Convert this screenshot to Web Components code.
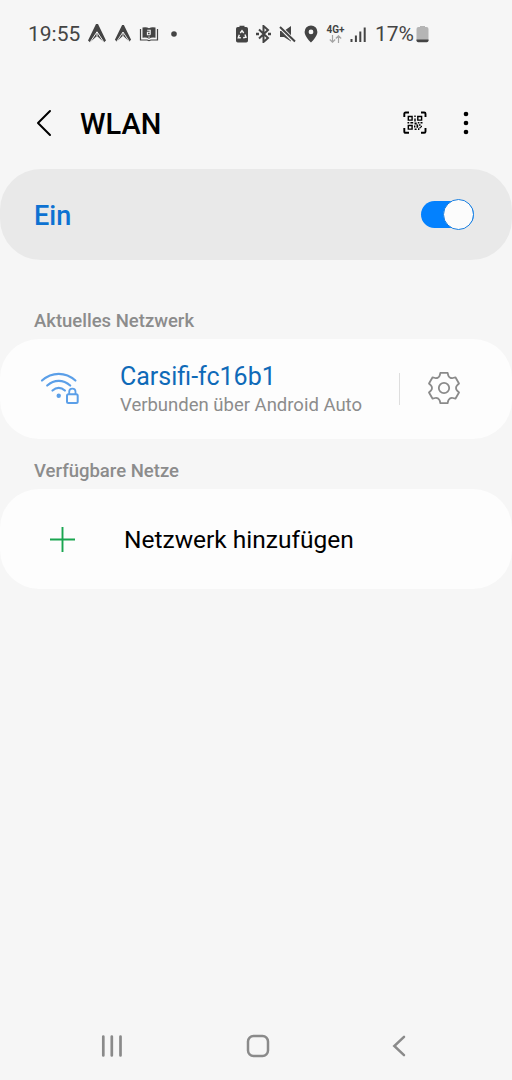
<!DOCTYPE html>
<html lang="de">
<head>
<meta charset="utf-8">
<meta name="viewport" content="width=device-width, initial-scale=1">
<title>WLAN</title>
<style>
  html, body {
    margin: 0;
    height: 100%;
    background: #f6f6f6;
  }
  body {
    font-family: Roboto, "Liberation Sans", sans-serif;
    color: #000;
  }
</style>
</head>
<body>
<wlan-screen></wlan-screen>

<script>
// name: [width, height, svg markup]
const ICONS = {
  nav: [20, 20, `<path fill="currentColor" d="M9 0h2l8 16.5-2 1.8L10 12l-7 6.3-2-1.8z"/><path d="M3.4 17.8 10 7.8l6.600 10M10 8v4" fill="none" stroke="#f6f6f6" stroke-width="1"/>`],
  book: [20, 16, `<path fill="currentColor" d="M3.500 1.500q4-1 6.500.8 2.500-1.800 6.500-.8v10.300q-4-.8-6.500.9-2.500-1.700-6.500-.9z"/><path d="M1.500 3v11h6.700l1.800.7 1.800-.7h6.700V3" fill="none" stroke="currentColor" stroke-width="1.200"/><path d="M8.200 4.200h3v4.500M11.200 6.300h-2.800v2.400h2.800M10 10.500v1.200" fill="none" stroke="#f6f6f6" stroke-width="1.100"/>`],
  dot: [6, 6, `<circle cx="3" cy="3" r="2.800" fill="currentColor"/>`],
  recycle: [12, 18, `<path fill="currentColor" d="M3.500 2V.7h5V2h1.700Q12 2 12 3.800v11.900q0 1.800-1.800 1.800H1.800Q0 17.500 0 15.700V3.800Q0 2 1.800 2z"/><path d="M4.300 8 6 5.600 7.700 8M9 9.500l1 2.700-2.800.5M4.800 12.700H2.300l1-3" fill="none" stroke="#f6f6f6" stroke-width="1.400"/>`],
  bluetooth: [15, 18, `<path d="m3 4.500 9 8.500-4.500 4V1L12 5 3 13.500" fill="none" stroke="currentColor" stroke-width="2"/><path fill="currentColor" d="M0 7.800h3v2.400H0zM12 7.800h3v2.400h-3z"/>`],
  mute: [17, 18, `<path fill="currentColor" d="M1 6h4l7-5v15.500L5 12H1z"/><path d="M0 1l16 16" stroke="#f6f6f6" stroke-width="4"/><path d="M1 2l15 14.500" stroke="currentColor" stroke-width="2"/>`],
  pin: [14, 18, `<path fill="currentColor" fill-rule="evenodd" d="M7 .5a6.400 6.400 0 0 1 6.400 6.400C13.400 11.300 7 17.500 7 17.500S.6 11.300.6 6.900A6.400 6.400 0 0 1 7 .5zm0 4a2.400 2.400 0 1 0 0 4.800 2.400 2.400 0 0 0 0-4.800z"/>`],
  arrows: [13, 8, `<path d="M3.500 0v7M.8 4.500l2.700 2.700 2.700-2.700M9.500 8V1M6.800 3.500 9.500.8l2.700 2.700" fill="none" stroke="#a4a4a4" stroke-width="1.200"/>`],
  signal: [17, 18, `<path fill="currentColor" d="M.5 14h2v3h-2zM4.900 10.500h2V17h-2zM9.300 6.500h2V17h-2zM13.700 2.500h2V17h-2z"/>`],
  battery: [13, 18, `<path fill="#b5b5b5" d="M4 2V1h5v1h1.500Q12.500 2 12.500 4v12h-12V4q0-2 2-2z"/><path fill="currentColor" d="M.5 14.500h12v1q0 1.700-1.700 1.700H2.200Q.5 17.200.5 15.500z"/>`],
  back: [16, 28, `<path d="M14 2 2 14l12 12" fill="none" stroke="currentColor" stroke-width="2" stroke-linecap="round" stroke-linejoin="round"/>`],
  qr: [24, 24, `<path d="M1.300 6V2.800q0-1.300 1.300-1.300H6M18 1.500h3.200q1.300 0 1.300 1.300V6M22.500 17v3.500q0 1.300-1.300 1.300H18M6 21.800H2.600q-1.300 0-1.300-1.300V17" fill="none" stroke="currentColor" stroke-width="1.900"/>
    <path d="M5.300 5.500h3.800v3.600H5.300zM14.800 5.500h3.800v3.600h-3.800zM5.300 14.500h3.800v3.600H5.300z" fill="none" stroke="currentColor" stroke-width="1.400"/>
    <path fill="currentColor" d="M11.300 4.500h1.400v1.600h-1.400zM11.300 7.500h1.400v3h-1.400zM4.500 11h1.700v1.500H4.500zM7.400 11h2.800v1.500H7.400zM11.500 11.500h2.200v2h-2.200zM14.800 11h1.600v1.500h-1.600zM17.500 11h2v1.500h-2zM11 14.500h1.400v2H11zM13.500 13.500h1.700v3.200h-1.700zM16 13.300h1.500v1.500H16zM17.600 14.800H19v1.500h-1.400zM11.600 17.500h2v1.600h-2zM15 17.300h1.400v1.700H15zM16.500 16h1.300v1.300h-1.300z"/>`],
  more: [6, 24, `<g fill="currentColor"><circle cx="3" cy="3" r="2.300"/><circle cx="3" cy="12" r="2.300"/><circle cx="3" cy="21" r="2.300"/></g>`],
  wifiLock: [40, 36, `<g fill="none" stroke="currentColor" stroke-width="2.200" stroke-linecap="round"><path d="M2 9.500Q9.500 2.800 18.700 2.800T35.400 9.500M7.200 14.500Q12.500 9.800 18.700 9.800t11.500 4.700M12.500 19.500q3-2.700 6.200-2.700t6.200 2.700"/><rect x="27" y="23.200" width="10.700" height="8.800" rx="1.500" stroke-width="2"/><path d="M29.200 23v-2.300a3.150 3.150 0 0 1 6.300 0V23" stroke-width="1.800"/></g><circle cx="18.700" cy="24.800" r="2.200" fill="currentColor"/>`],
  gear: [34, 34, `<g transform="translate(17 17)" fill="none" stroke="currentColor" stroke-width="1.800" stroke-linejoin="round"><path d="M-3.600-15.200H3.600L4.300-12.600Q4.700-11.200 6-10.400 7.400-9.600 8.800-10L11.400-10.700 15-4.500 13.100-2.600Q12-1.500 12 0T13.100 2.600L15 4.500 11.400 10.700 8.800 10Q7.400 9.600 6 10.400 4.700 11.200 4.300 12.600L3.600 15.200H-3.600L-4.300 12.600Q-4.700 11.200-6 10.400-7.400 9.600-8.800 10L-11.400 10.700-15 4.500-13.100 2.600Q-12 1.500-12 0T-13.100-2.600L-15-4.500-11.400-10.700-8.800-10Q-7.400-9.600-6-10.400-4.700-11.200-4.300-12.600Z"/><circle r="5.200"/></g>`],
  plus: [27, 27, `<path d="M13.500 1v25M1 13.500h25" stroke="currentColor" stroke-width="1.900"/>`],
  recents: [22, 24, `<path d="M2.300 2.500v19M10.800 2.500v19M19.500 2.500v19" stroke="currentColor" stroke-width="2.700" stroke-linecap="round"/>`],
  home: [24, 24, `<rect x="2" y="2" width="20" height="20" rx="5.500" fill="none" stroke="currentColor" stroke-width="2.500"/>`],
  navBack: [14, 24, `<path d="M12 2.800 2.300 12l9.700 9.200" fill="none" stroke="currentColor" stroke-width="2.500" stroke-linecap="round"/>`]
};

class UiIcon extends HTMLElement {
  constructor() {
    super();
    this.attachShadow({ mode: "open" });
  }

  connectedCallback() {
    const [w, h, body] = ICONS[this.getAttribute("name")];
    this.shadowRoot.innerHTML = `
      <style>
        :host { display: block; flex: none; width: ${w}px; height: ${h}px; }
        svg { display: block; }
      </style>
      <svg width="${w}" height="${h}" viewBox="0 0 ${w} ${h}" aria-hidden="true">${body}</svg>
    `;
  }
}

class StatusBar extends HTMLElement {
  constructor() {
    super();
    this.attachShadow({ mode: "open" }).innerHTML = `
      <style>
        :host {
          display: flex;
          justify-content: space-between;
          box-sizing: border-box;
          height: 68px;
          padding: 0 83px 0 28px;
          color: #444;
          font-size: 21px;
          line-height: 24px;
        }
        div { display: flex; align-items: center; }
        .time { width: 59px; }
        .left { gap: 7px; }
        .left .time { margin-right: -7px; }
        .left ui-icon[name="dot"] { margin-left: 5px; }
        .right { gap: 8px; }
        .net { flex-direction: column; width: 17px; gap: 1px; }
        .net span { font-size: 10px; line-height: 8px; font-weight: 700; }
        .net { margin-left: 1px; margin-right: -2px; }
        .pct { margin-right: -6px; }
      </style>
      <div class="left">
        <span class="time">19:55</span>
        <ui-icon name="nav"></ui-icon>
        <ui-icon name="nav" style="zoom:.9"></ui-icon>
        <ui-icon name="book"></ui-icon>
        <ui-icon name="dot"></ui-icon>
      </div>
      <div class="right">
        <ui-icon name="recycle"></ui-icon>
        <ui-icon name="bluetooth"></ui-icon>
        <ui-icon name="mute"></ui-icon>
        <ui-icon name="pin"></ui-icon>
        <div class="net"><span>4G+</span><ui-icon name="arrows"></ui-icon></div>
        <ui-icon name="signal"></ui-icon>
        <span class="pct">17%</span>
        <ui-icon name="battery"></ui-icon>
      </div>
    `;
  }
}

class AppHeader extends HTMLElement {
  constructor() {
    super();
    this.attachShadow({ mode: "open" }).innerHTML = `
      <style>
        :host {
          display: flex;
          align-items: center;
          box-sizing: border-box;
          height: 101px;
          padding: 9px 43px 0 36px;
        }
        h1 {
          flex: 1;
          margin: 2px 0 0 28px;
          font-size: 29px;
          line-height: 34px;
          font-weight: 500;
        }
        ui-icon[name="more"] { margin-left: 36px; }
      </style>
      <ui-icon name="back"></ui-icon>
      <h1><slot></slot></h1>
      <ui-icon name="qr"></ui-icon>
      <ui-icon name="more"></ui-icon>
    `;
  }
}

class MasterSwitch extends HTMLElement {
  constructor() {
    super();
    this.attachShadow({ mode: "open" }).innerHTML = `
      <style>
        :host {
          display: flex;
          align-items: center;
          justify-content: space-between;
          box-sizing: border-box;
          height: 91px;
          padding: 0 38px 0 34px;
          border-radius: 41px;
          background: #e9e9e9;
          color: #0d72d2;
          font-size: 27px;
          font-weight: 500;
        }
        .label { padding-top: 2px; }
        .track {
          display: flex;
          align-items: center;
          justify-content: flex-end;
          width: 53px;
          height: 27px;
          border-radius: 14px;
          background: #0381fe;
        }
        .knob {
          flex: none;
          box-sizing: border-box;
          width: 31px;
          height: 31px;
          border: 1.5px solid #1a7fe0;
          border-radius: 50%;
          background: #fcfcfc;
        }
      </style>
      <span class="label"><slot></slot></span>
      <span class="track"><span class="knob"></span></span>
    `;
  }
}

class NetworkSection extends HTMLElement {
  constructor() {
    super();
    this.attachShadow({ mode: "open" });
  }

  connectedCallback() {
    this.shadowRoot.innerHTML = `
      <style>
        :host { display: block; }
        h2 {
          margin: 0;
          padding: 0 34px 7px;
          color: #8c8c8c;
          font-size: 18.5px;
          line-height: 22px;
          font-weight: 500;
        }
        .card {
          display: flex;
          height: 100px;
          border-radius: 39px;
          background: #fdfdfd;
        }
      </style>
      <h2>${this.getAttribute("heading")}</h2>
      <div class="card"><slot></slot></div>
    `;
  }
}

class NetworkRow extends HTMLElement {
  constructor() {
    super();
    this.attachShadow({ mode: "open" }).innerHTML = `
      <style>
        :host {
          display: flex;
          flex: 1;
          align-items: center;
          padding: 0 51px 0 40px;
        }
        .text { flex: 1; margin: 1px 0 0 40px; }
        .name { color: #0f6ab8; font-size: 25px; line-height: 30px; }
        .info { color: #8c8c8c; font-size: 18.5px; line-height: 26px; }
        .divider { width: 1px; height: 32px; margin-right: 27px; background: #dedede; }
        ui-icon[name="wifiLock"] { color: #5b9fe8; }
        ui-icon[name="gear"] { color: #8a8a8a; margin-top: -2px; }
      </style>
      <ui-icon name="wifiLock"></ui-icon>
      <div class="text">
        <div class="name"><slot name="name"></slot></div>
        <div class="info"><slot name="info"></slot></div>
      </div>
      <div class="divider"></div>
      <ui-icon name="gear"></ui-icon>
    `;
  }
}

class AddNetworkRow extends HTMLElement {
  constructor() {
    super();
    this.attachShadow({ mode: "open" }).innerHTML = `
      <style>
        :host {
          display: flex;
          align-items: center;
          padding-left: 49px;
          font-size: 24.5px;
          line-height: 30px;
        }
        ui-icon { color: #1aa550; }
        span { margin: 2px 0 0 48px; }
      </style>
      <ui-icon name="plus"></ui-icon>
      <span><slot></slot></span>
    `;
  }
}

class NavigationBar extends HTMLElement {
  constructor() {
    super();
    this.attachShadow({ mode: "open" }).innerHTML = `
      <style>
        :host {
          display: flex;
          align-items: center;
          justify-content: space-between;
          height: 69px;
          padding: 0 106px 0 101px;
          color: #8a8a8a;
        }
      </style>
      <ui-icon name="recents"></ui-icon>
      <ui-icon name="home"></ui-icon>
      <ui-icon name="navBack"></ui-icon>
    `;
  }
}

class WlanScreen extends HTMLElement {
  constructor() {
    super();
    this.attachShadow({ mode: "open" }).innerHTML = `
      <style>
        :host {
          display: flex;
          flex-direction: column;
          width: 512px;
          height: 1080px;
        }
        main { flex: 1; padding-top: 50px; }
        network-section + network-section { margin-top: 21px; }
      </style>
      <status-bar></status-bar>
      <app-header>WLAN</app-header>
      <master-switch>Ein</master-switch>
      <main>
        <network-section heading="Aktuelles Netzwerk">
          <network-row>
            <span slot="name">Carsifi-fc16b1</span>
            <span slot="info">Verbunden über Android Auto</span>
          </network-row>
        </network-section>
        <network-section heading="Verfügbare Netze">
          <add-network-row>Netzwerk hinzufügen</add-network-row>
        </network-section>
      </main>
      <navigation-bar></navigation-bar>
    `;
  }
}

customElements.define("ui-icon", UiIcon);
customElements.define("status-bar", StatusBar);
customElements.define("app-header", AppHeader);
customElements.define("master-switch", MasterSwitch);
customElements.define("network-section", NetworkSection);
customElements.define("network-row", NetworkRow);
customElements.define("add-network-row", AddNetworkRow);
customElements.define("navigation-bar", NavigationBar);
customElements.define("wlan-screen", WlanScreen);
</script>
</body>
</html>
